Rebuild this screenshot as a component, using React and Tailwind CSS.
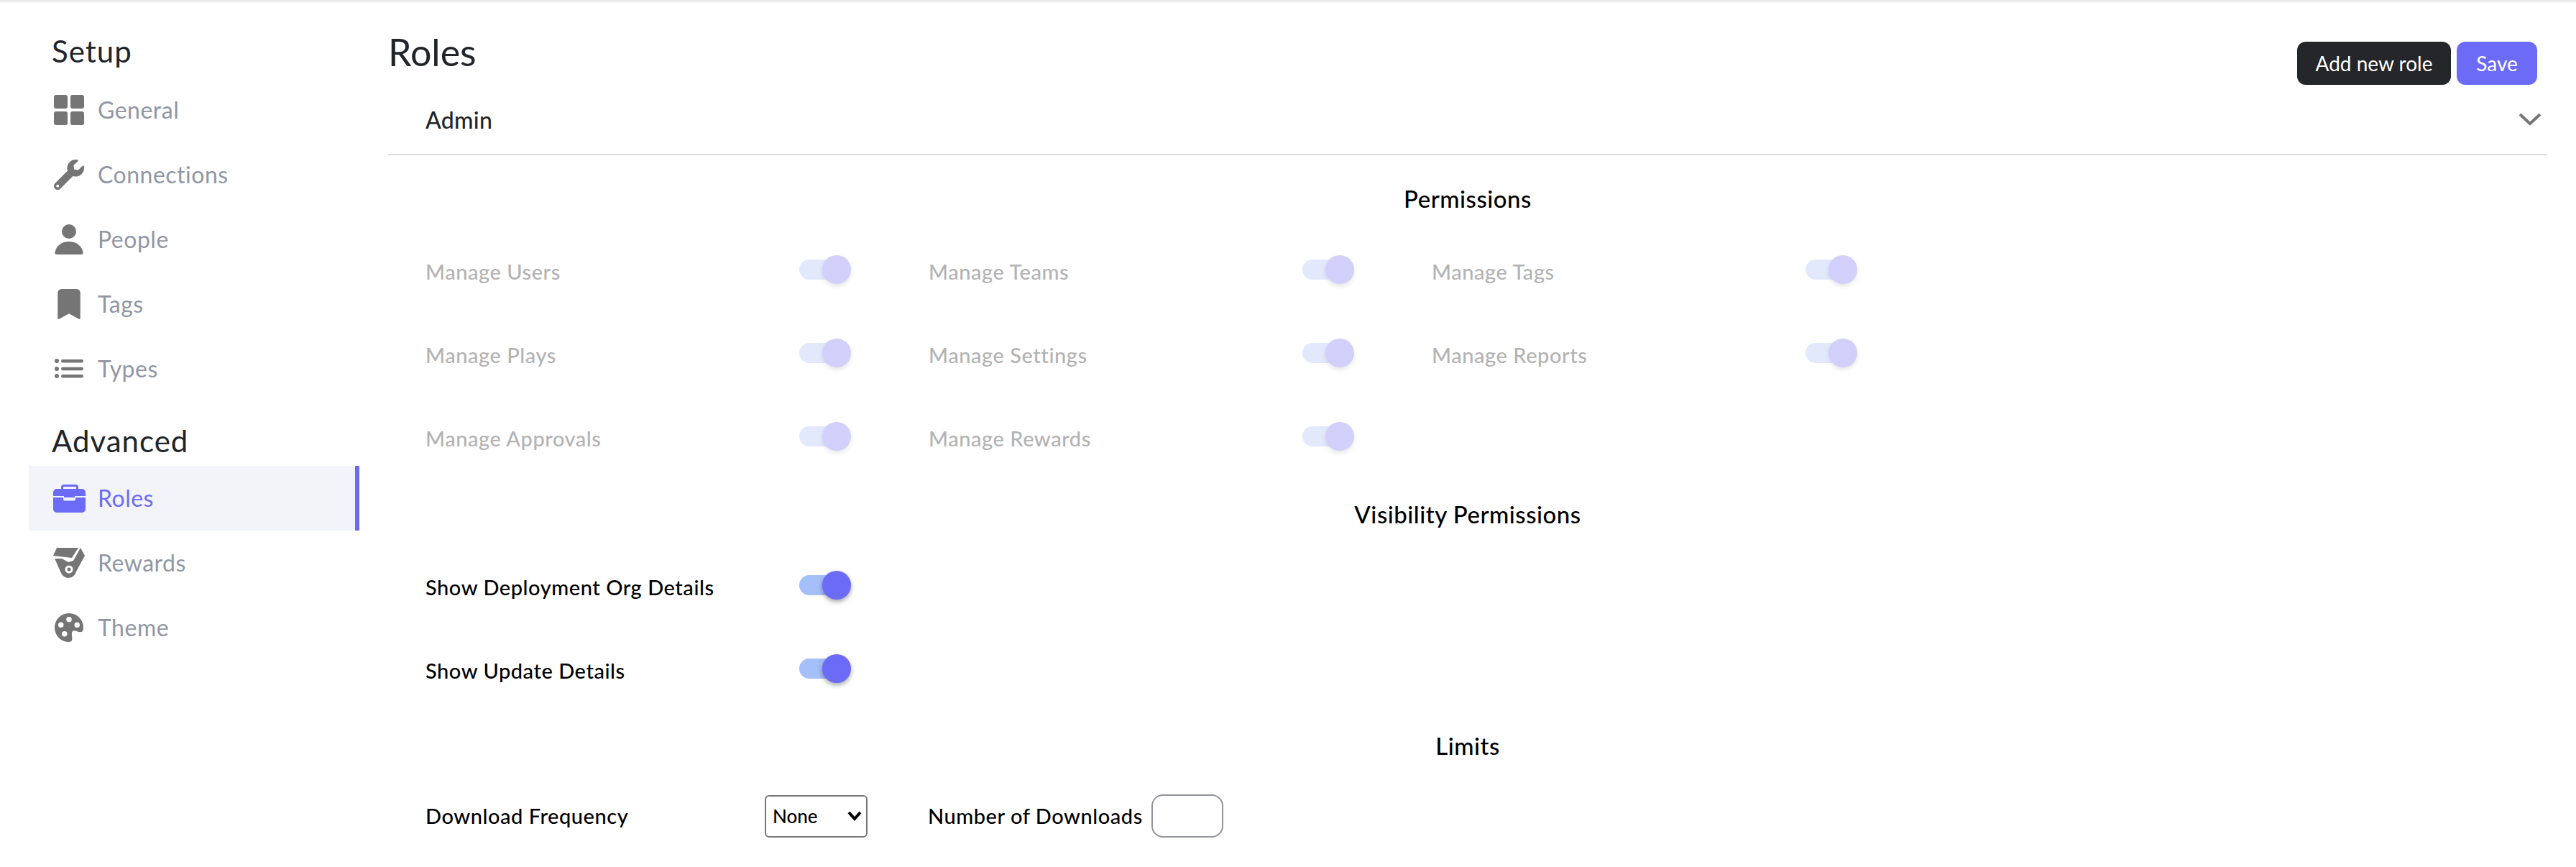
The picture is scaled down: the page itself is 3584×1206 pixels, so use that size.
import { BsBookmarkFill, BsPaletteFill } from 'react-icons/bs';
import { FaWrench } from 'react-icons/fa';

function GridIcon({ className }) {
  return (
    <svg viewBox="0 0 42 42" fill="currentColor" className={className}>
      <rect x="0" y="0" width="19" height="19" rx="3" />
      <rect x="23" y="0" width="19" height="19" rx="3" />
      <rect x="0" y="23" width="19" height="19" rx="3" />
      <rect x="23" y="23" width="19" height="19" rx="3" />
    </svg>
  );
}

function PersonIcon({ className }) {
  return (
    <svg viewBox="0 0 42 42" fill="currentColor" className={className}>
      <circle cx="21" cy="10" r="10" />
      <path d="M4 42Q1 42 1.5 39C3 30 11 24 21 24C31 24 39 30 40.5 39Q41 42 38 42Z" />
    </svg>
  );
}

function ListIcon({ className }) {
  return (
    <svg viewBox="0 0 42 42" fill="currentColor" className={className}>
      <circle cx="4" cy="10" r="3" />
      <circle cx="4" cy="21" r="3" />
      <circle cx="4" cy="31" r="3" />
      <rect x="10" y="8" width="31" height="4.5" rx="2.2" />
      <rect x="10" y="18.7" width="31" height="4.5" rx="2.2" />
      <rect x="10" y="29" width="31" height="4.5" rx="2.2" />
    </svg>
  );
}

function BriefcaseIcon({ className }) {
  return (
    <svg viewBox="0 0 45 39" fill="currentColor" className={className}>
      <path fillRule="evenodd" d="M14 0H31A4 4 0 0 1 35 4V6H40A5 5 0 0 1 45 11V16H30V18H15V16H0V11A5 5 0 0 1 5 6H11V4A4 4 0 0 1 14 0ZM14 3V6H32V3Z" />
      <path d="M0 18H14V20.5A2 2 0 0 0 16 22.5H29A2 2 0 0 0 31 20.5V18H45V34A5 5 0 0 1 40 39H5A5 5 0 0 1 0 34Z" />
    </svg>
  );
}

function RewardsIcon({ className }) {
  return (
    <svg viewBox="0 0 44 42" fill="currentColor" className={className}>
      <path d="M5 0H35L26 14L0 11Z" />
      <path d="M38 0L44 11L32 33A11 11 0 0 1 11 35L2 15L12 15L21 20L28 18Z" />
      <circle cx="22" cy="30" r="5.5" fill="white" />
      <circle cx="22" cy="30" r="2.5" />
    </svg>
  );
}

const setup = [
  { label: 'General', icon: GridIcon, size: 'w-[42px] h-[42px]' },
  { label: 'Connections', icon: FaWrench, size: 'w-[42px] h-[42px]' },
  { label: 'People', icon: PersonIcon, size: 'w-[42px] h-[42px]' },
  { label: 'Tags', icon: BsBookmarkFill, size: 'w-[42px] h-[42px]' },
  { label: 'Types', icon: ListIcon, size: 'w-[42px] h-[42px]' },
];

const advanced = [
  { label: 'Roles', icon: BriefcaseIcon, size: 'w-[45px] h-[39px]', active: true },
  { label: 'Rewards', icon: RewardsIcon, size: 'w-[44px] h-[42px]' },
  { label: 'Theme', icon: BsPaletteFill, size: 'w-[40px] h-[40px]' },
];

const permissions = [
  'Manage Users', 'Manage Teams', 'Manage Tags',
  'Manage Plays', 'Manage Settings', 'Manage Reports',
  'Manage Approvals', 'Manage Rewards',
];

function NavItem({ label, icon: Icon, size, active }) {
  return (
    <div className={`flex h-[90px] items-center pl-[35px] border-r-[6px] ${active ? 'bg-[#f3f4f9] border-[#6b6bf8]' : 'border-transparent'}`}>
      <div className="flex w-[42px] justify-center">
        <Icon className={`shrink-0 ${size} ${active ? 'text-[#6b6bf8]' : 'text-[#757575]'}`} />
      </div>
      <span className={`ml-[19px] text-[32px] tracking-[0.5px] ${active ? 'text-[#6b6bf8]' : 'text-[#9197a3]'}`}>{label}</span>
    </div>
  );
}

function Toggle({ disabled }) {
  return (
    <div className={`relative w-[68px] h-[28px] -mt-[2px] rounded-full ${disabled ? 'bg-[#e3e9fd]' : 'bg-[#a5bffa]'}`}>
      <div className={`absolute -right-[4px] -top-[6px] w-[40px] h-[40px] rounded-full ${disabled ? 'bg-[#d2d0fb] shadow-[0_3px_6px_rgba(0,0,0,0.1)]' : 'bg-[#6b6bf8] shadow-[0_3px_6px_rgba(0,0,0,0.35)]'}`} />
    </div>
  );
}

function ToggleCell({ label, disabled }) {
  return (
    <div className="flex w-[700px] h-[116px] items-center">
      <span className={`w-[520px] mt-[4px] text-[29px] tracking-[0.55px] font-medium ${disabled ? 'text-[#b3b3b3]' : 'text-black'}`}>{label}</span>
      <Toggle disabled={disabled} />
    </div>
  );
}

function SectionTitle({ children, className }) {
  return <h3 className={`h-[40px] leading-[40px] text-center text-[33px] tracking-[0.5px] font-medium text-black ${className}`}>{children}</h3>;
}

export default function App() {
  return (
    <div className="h-[1206px] overflow-hidden bg-white font-['Lato',sans-serif] text-[#212529]">
      <div className="h-[5px] bg-gradient-to-b from-[#e6e6e6] to-white" />
      <div className="flex">
        <aside className="w-[460px] ml-10 shrink-0">
          <h2 className="pl-[32px] mt-[42px] mb-[13px] h-[48px] leading-[48px] text-[42px] tracking-[1px]">Setup</h2>
          {setup.map((item) => <NavItem key={item.label} {...item} />)}
          <h2 className="pl-[32px] mt-[31px] mb-[11px] h-[48px] leading-[48px] text-[42px] tracking-[1px]">Advanced</h2>
          {advanced.map((item) => <NavItem key={item.label} {...item} />)}
        </aside>
        <main className="flex-1 ml-10 mr-10">
          <div className="flex justify-between h-[122px]">
            <h1 className="mt-[38px] text-[52px] leading-[58px]">Roles</h1>
            <div className="flex gap-2 mt-[53px] mr-[14px] h-[60px]">
              <button className="w-[214px] rounded-xl bg-[#25262a] text-white text-[28px]">Add new role</button>
              <button className="w-[112px] rounded-xl bg-[#6b6bf8] text-white text-[28px]">Save</button>
            </div>
          </div>
          <div className="flex items-center justify-between h-[90px] -mt-[1px] pl-[52px] pr-[8px] border-b-2 border-[#dddddd]">
            <span className="-mt-[6px] text-[32px] tracking-[0.3px] font-medium">Admin</span>
            <svg viewBox="0 0 32 18" fill="none" stroke="#757575" strokeWidth="4" className="w-[32px] h-[18px] -mt-[8px]">
              <path d="M2 2L16 15L30 2" />
            </svg>
          </div>
          <SectionTitle className="mt-[40px]">Permissions</SectionTitle>
          <div className="grid grid-cols-[repeat(3,700px)] pl-[52px] mt-[22px]">
            {permissions.map((label) => <ToggleCell key={label} label={label} disabled />)}
          </div>
          <SectionTitle className="mt-[29px]">Visibility Permissions</SectionTitle>
          <div className="pl-[52px] mt-[22px]">
            <ToggleCell label="Show Deployment Org Details" />
            <ToggleCell label="Show Update Details" />
          </div>
          <SectionTitle className="mt-[28px]">Limits</SectionTitle>
          <div className="flex items-center pl-[52px] mt-[48px] text-[29px] tracking-[0.55px] font-medium text-black">
            <span className="w-[472px]">Download Frequency</span>
            <div className="relative">
              <select className="block w-[143px] h-[59px] pl-[9px] appearance-none border-2 border-[#767676] rounded-md bg-white text-[26px] tracking-normal">
                <option>None</option>
              </select>
              <svg viewBox="0 0 20 14" fill="none" stroke="black" strokeWidth="4" className="absolute right-[8px] top-[22px] w-[20px] h-[14px]">
                <path d="M2 2L10 11L18 2" />
              </svg>
            </div>
            <span className="ml-[84px] w-[311px]">Number of Downloads</span>
            <input className="w-[100px] h-[60px] border-2 border-[#909399] rounded-2xl" />
          </div>
        </main>
      </div>
    </div>
  );
}
